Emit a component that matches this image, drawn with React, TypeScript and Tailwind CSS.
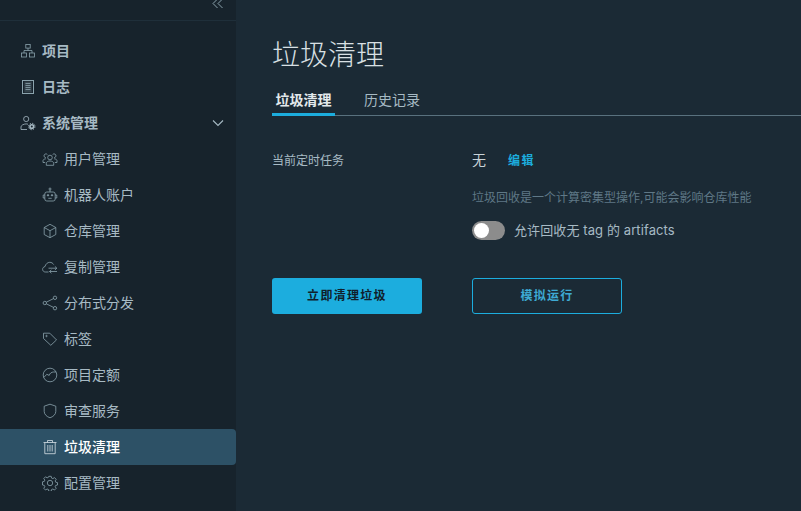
import type { ReactNode } from "react";

const font = { fontFamily: '"Inter", "Noto Sans CJK SC", sans-serif' };

function Icon({ children }: { children: ReactNode }) {
  return (
    <svg viewBox="0 0 16 16" fill="none" stroke="currentColor" strokeWidth="0.8" className="h-4 w-4 shrink-0">
      {children}
    </svg>
  );
}

const ProjectIcon = (
  <Icon>
    <rect x="5.8" y="1.500" width="4.400" height="3.600" />
    <rect x="1.500" y="10" width="5" height="4" />
    <rect x="9.500" y="10" width="5" height="4" />
    <path d="M8 5.100v2.400M4 10V7.500h8V10" />
  </Icon>
);
const LogIcon = (
  <Icon>
    <rect x="2.500" y="1.500" width="11" height="13" strokeWidth="1" />
    <path d="M4.300 2.500h7.400v11H4.300z" fill="currentColor" fillOpacity="0.25" stroke="none" />
    <path d="M5.500 4.500h5M5.500 6.500h5M5.500 8.500h5M5.500 10.500h5" />
  </Icon>
);
const SystemIcon = (
  <Icon>
    <circle cx="6.200" cy="4" r="2.600" />
    <path d="M1 14.500v-2.600c0-1.500 2.600-3 5.200-3 .7 0 1.300.1 1.800.3M1 14.500h6" />
    <circle cx="11.800" cy="11.500" r="2.600" fill="currentColor" stroke="none" />
    <circle cx="11.800" cy="11.500" r="3.200" strokeWidth="1" strokeDasharray="1.300 1.200" />
    <circle cx="11.800" cy="11.500" r="1" fill="#17232c" stroke="none" />
  </Icon>
);
const UsersIcon = (
  <Icon>
    <circle cx="8" cy="6.500" r="2.300" />
    <path d="M4.300 14.300v-2.100c0-1.200 1.700-2.200 3.700-2.200s3.700 1 3.700 2.200v2.100z" />
    <path d="M5.400 3.600a1.900 1.900 0 1 0-1.500 3.100M10.600 3.600a1.900 1.900 0 1 1 1.500 3.100M3.200 11.500H1V9.700c0-1 1.200-1.900 2.800-1.900M12.800 11.500H15V9.700c0-1-1.200-1.900-2.800-1.900" />
  </Icon>
);
const RobotIcon = (
  <Icon>
    <rect x="2.800" y="5" width="10.400" height="9" rx="2" />
    <circle cx="8" cy="2" r="1" />
    <path d="M8 3v2M2.800 8H1.200v3h1.600M13.200 8h1.600v3h-1.600M6.300 11.300h3.400" />
    <circle cx="6" cy="8.300" r=".7" fill="currentColor" />
    <circle cx="10" cy="8.300" r=".7" fill="currentColor" />
  </Icon>
);
const BoxIcon = (
  <Icon>
    <path d="M8 1.300l5.800 3.200v7L8 14.700l-5.800-3.200v-7z" />
    <path d="M2.200 4.500L8 7.700l5.800-3.200M8 7.700v7" />
  </Icon>
);
const CloudIcon = (
  <Icon>
    <path d="M6.500 13H3.300C1.800 13 .6 11.800.6 10.300c0-1.400 1-2.500 2.400-2.700C3.500 5.200 5.500 3.300 7.800 3.300c1.700 0 3.100.9 3.900 2.300" />
    <path d="M6.500 9.200h8.300M12.900 7.400l1.900 1.800-1.900 1.800M15 12.500H7.500M9.400 10.800l-1.900 1.700 1.900 1.700" />
  </Icon>
);
const ShareIcon = (
  <Icon>
    <circle cx="2.800" cy="8" r="1.700" />
    <circle cx="13" cy="2.800" r="1.700" />
    <circle cx="13" cy="13.200" r="1.700" />
    <path d="M4.300 7.200l7.200-3.600M4.300 8.800l7.200 3.600" />
  </Icon>
);
const TagIcon = (
  <Icon>
    <path d="M1.500 2.200h6.300l6.700 6.700-5.700 5.400-7.300-6.800z" />
    <circle cx="4.500" cy="5" r=".7" />
  </Icon>
);
const QuotaIcon = (
  <Icon>
    <circle cx="8" cy="8" r="6.800" />
    <path d="M1.800 10.500l3-3.200 2.400 1.100c.5-2 2.300-3.400 4.400-3.400h2.500" />
  </Icon>
);
const ShieldIcon = (
  <Icon>
    <path d="M8 1.200l5.800 2v5.200c0 3-2.600 5.300-5.800 6.400-3.200-1.100-5.800-3.400-5.800-6.400V3.200z" />
  </Icon>
);
const TrashIcon = (
  <Icon>
    <path d="M1.500 3.500h13M5.500 3.500V1.500h5v2M2.800 3.500v11.200h10.400V3.500M5.800 6v6.500M8 6v6.500M10.200 6v6.500" />
  </Icon>
);
const GearIcon = (
  <Icon>
    <circle cx="8" cy="8" r="2.700" />
    <path d="M6.800 1.300h2.400l.4 1.800 1.300.5 1.600-1 1.700 1.700-1 1.600.5 1.300 1.800.4v2.400l-1.800.4-.5 1.300 1 1.600-1.700 1.700-1.600-1-1.300.5-.4 1.800H6.800l-.4-1.800-1.300-.5-1.600 1-1.700-1.700 1-1.600-.5-1.300-1.800-.4V6.800l1.800-.4.500-1.300-1-1.600 1.700-1.700 1.600 1 1.300-.5z" />
  </Icon>
);

const topItems = [
  { label: "项目", icon: ProjectIcon },
  { label: "日志", icon: LogIcon },
];

const subItems = [
  { label: "用户管理", icon: UsersIcon },
  { label: "机器人账户", icon: RobotIcon },
  { label: "仓库管理", icon: BoxIcon },
  { label: "复制管理", icon: CloudIcon },
  { label: "分布式分发", icon: ShareIcon },
  { label: "标签", icon: TagIcon },
  { label: "项目定额", icon: QuotaIcon },
  { label: "审查服务", icon: ShieldIcon },
  { label: "垃圾清理", icon: TrashIcon, active: true },
  { label: "配置管理", icon: GearIcon },
];

function Sidebar() {
  return (
    <aside className="flex h-full w-[236px] shrink-0 flex-col overflow-hidden bg-[#17232c]">
      <div className="flex h-[21px] shrink-0 items-end justify-end border-b border-[#1f2f3a] pb-[11px] pr-[12px]">
        <svg viewBox="0 0 12 10" fill="none" stroke="#8ba3ad" strokeWidth="1" className="h-[10px] w-[12px]">
          <path d="M5.500 0L1 4.500 5.500 9M10.500 0L6 4.500 10.500 9" />
        </svg>
      </div>
      <nav className="mt-3 flex flex-col">
        {topItems.map((item) => (
          <div key={item.label} className="flex h-9 items-center gap-[6px] pl-[20px] text-sm font-bold text-[#a7bac4]">
            <span className="text-[#8ba3ad]">{item.icon}</span>
            {item.label}
          </div>
        ))}
        <div className="flex h-9 items-center gap-[6px] pl-[20px] pr-[12px] text-sm font-bold text-[#a7bac4]">
          <span className="text-[#a7bac4]">{SystemIcon}</span>
          系统管理
          <svg viewBox="0 0 12 8" fill="none" stroke="#a7bac4" strokeWidth="1.100" className="ml-auto h-[8px] w-[12px]">
            <path d="M1 1.500l5 5 5-5" />
          </svg>
        </div>
        {subItems.map((item) => (
          <div
            key={item.label}
            className={
              item.active
                ? "flex h-9 items-center gap-[6px] rounded-r bg-[#2d5166] pl-[42px] text-sm font-medium text-white"
                : "flex h-9 items-center gap-[6px] pl-[42px] text-sm text-[#a7bac4]"
            }
          >
            <span className={item.active ? "text-[#d5e0e6]" : "text-[#8ba3ad]"}>{item.icon}</span>
            {item.label}
          </div>
        ))}
      </nav>
    </aside>
  );
}

export default function App() {
  return (
    <div style={font} className="flex h-[511px] w-[801px] overflow-hidden bg-[#1b2a35]">
      <Sidebar />
      <main className="flex-1 pl-[36px] pt-[35px]">
        <h1 className="text-[28px] leading-[40px] font-light text-[#d9e0e4]">垃圾清理</h1>
        <div className="mt-[10px] flex h-[31px] gap-[29px] border-b border-[#59717e]">
          <div className="flex h-[31px] w-[63px] justify-center border-b-[3px] border-[#1cadde] pt-[5px] text-sm leading-[20px] font-bold text-[#e3e9ec]">
            垃圾清理
          </div>
          <div className="pt-[5px] text-sm leading-[20px] text-[#a7bac4]">历史记录</div>
        </div>

        <div className="mt-[34px] flex">
          <div className="w-[200px] pt-[2px] text-xs leading-[18px] text-[#a7bac4]">当前定时任务</div>
          <div>
            <div className="flex h-[20px] items-center">
              <span className="text-sm text-[#c9d3d8]">无</span>
              <span className="ml-[22px] pt-[1px] text-xs font-bold tracking-[1.500px] text-[#1cadde]">编辑</span>
            </div>
            <p className="mt-[19px] text-xs leading-[18px] text-[#5f7886]">
              垃圾回收是一个计算密集型操作,可能会影响仓库性能
            </p>
            <label className="mt-[13px] flex items-center gap-[9px]">
              <span className="relative block h-[19px] w-[33px] rounded-full bg-[#8c8c8c]">
                <span className="absolute left-[2px] top-[2px] h-[15px] w-[15px] rounded-full bg-white" />
              </span>
              <span className="text-[13px] leading-[20px] tracking-[0.1px] text-[#a7bac4]">允许回收无 tag 的 artifacts</span>
            </label>
          </div>
        </div>

        <div className="mt-[38px] flex gap-[50px]">
          <button className="h-9 w-[150px] rounded-[3px] bg-[#1cadde] text-xs font-bold tracking-[1.300px] text-[#10202b]">
            立即清理垃圾
          </button>
          <button className="h-9 w-[150px] rounded-[3px] border border-[#1cadde] text-xs font-bold tracking-[1.300px] text-[#3eaad4]">
            模拟运行
          </button>
        </div>
      </main>
    </div>
  );
}
